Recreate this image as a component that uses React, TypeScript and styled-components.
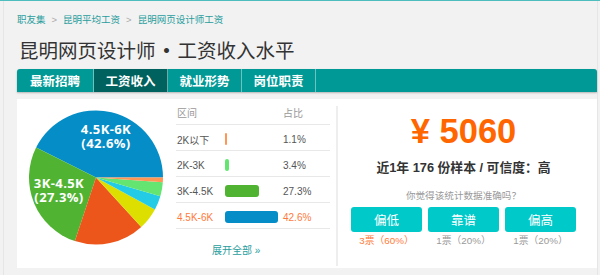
import React from 'react'
import styled, { createGlobalStyle } from 'styled-components'

const GlobalStyles = createGlobalStyle`
  html,
  body {
    margin: 0;
    padding: 0;
  }
  body {
    background: #f2f2f2;
    border-top: 1px solid #4dbdbd;
    font-family: 'Liberation Sans', 'Noto Sans CJK SC', sans-serif;
    color: #333;
  }
`

const Page = styled.div`
  margin: 0 2px 0 3px;
  padding: 11px 0 0 13px;
  border-left: 1px solid #e6e6e6;
  border-right: 1px solid #e6e6e6;
  min-height: 263px;
`

const Crumbs = styled.div`
  display: flex;
  align-items: center;
  height: 14px;
  font-size: 9.5px;
  font-family: 'Noto Sans CJK SC', sans-serif;
`
const Crumb = styled.a`
  color: #2a9d9d;
  text-decoration: none;
`
const CrumbSep = styled.span`
  color: #aaa;
  margin: 0 6px;
  font-family: 'Liberation Sans', sans-serif;
`

const Title = styled.h1`
  margin: 11px 0 0 2px;
  height: 26px;
  line-height: 26px;
  font-size: 19.5px;
  font-weight: normal;
  color: #333;
  font-family: 'Noto Sans CJK SC', sans-serif;
`
const Dot = styled.span`
  display: inline-block;
  width: 22px;
  text-align: center;
  font-weight: bold;
`

const TabBar = styled.div`
  margin-top: 6px;
  height: 23px;
  display: flex;
  background: #009996;
  border-radius: 3px 3px 0 0;
  box-shadow: 0 1px 2px rgba(0, 0, 0, 0.25);
`
const Tab = styled.div<{ $active?: boolean }>`
  width: 73px;
  display: flex;
  align-items: center;
  justify-content: center;
  color: #fff;
  font-weight: bold;
  font-size: 12.5px;
  font-family: 'Noto Sans CJK SC', sans-serif;
  background: ${p => (p.$active ? '#00625e' : 'transparent')};
  border-right: 1px solid rgba(200, 230, 230, 0.55);
  &:first-child {
    width: 76px;
    border-radius: 3px 0 0 0;
  }
`

const Panel = styled.div`
  margin-top: 7px;
  height: 169px;
  background: #fff;
  display: grid;
  grid-template-columns: 159px 160px 1fr;
`

const PieBox = styled.div`
  position: relative;
`

const TableBox = styled.div`
  display: flex;
  flex-direction: column;
  font-size: 10px;
  color: #555;
  margin-right: 6px;
`
const HeadRow = styled.div`
  display: grid;
  grid-template-columns: 106px 1fr;
  align-items: center;
  height: 24px;
  padding: 1px 0 0 1px;
  color: #999;
  border-bottom: 1px solid #e8e8e8;
`
const Row = styled.div<{ $hot?: boolean }>`
  display: grid;
  grid-template-columns: 48px 58px 1fr;
  align-items: center;
  height: 22px;
  padding: 3px 0 0 1px;
  border-bottom: 1px solid #e8e8e8;
  color: ${p => (p.$hot ? '#ff7a3a' : '#555')};
`
const Bar = styled.div<{ $color: string }>`
  height: 12px;
  border-radius: 3px;
  background: ${p => p.$color};
`
const More = styled.a`
  margin: 13px 0 0 36px;
  color: #2a9d9d;
  font-size: 10px;
  text-decoration: none;
`

const Summary = styled.div`
  border-left: 2px solid #eee;
  margin: 7px 0 6px;
  padding-right: 8px;
  display: flex;
  flex-direction: column;
  align-items: center;
`
const Salary = styled.div`
  margin-top: 5px;
  height: 40px;
  line-height: 40px;
  font-size: 34.5px;
  font-weight: bold;
  color: #ff6600;
`
const Sample = styled.div`
  margin-top: 9px;
  height: 16px;
  line-height: 16px;
  font-size: 12.8px;
  font-weight: bold;
  color: #333;
`
const Ask = styled.div`
  margin-top: 13px;
  height: 14px;
  line-height: 14px;
  font-size: 9.6px;
  color: #999;
`
const Votes = styled.div`
  margin-top: 4px;
  display: flex;
  gap: 6px;
`
const Vote = styled.div`
  display: flex;
  flex-direction: column;
  align-items: center;
`
const VoteButton = styled.button`
  width: 71px;
  height: 25px;
  border: none;
  border-radius: 3px;
  background: #00c9c9;
  color: #fff;
  font-size: 12.5px;
  font-family: 'Noto Sans CJK SC', sans-serif;
  padding: 0;
`
const VoteCount = styled.div<{ $hot?: boolean }>`
  margin-top: 2px;
  line-height: 14px;
  font-size: 9.8px;
  color: ${p => (p.$hot ? '#ff7a3a' : '#999')};
`

const slices = [
  { pct: 42.6, color: '#058DC7' },
  { pct: 27.3, color: '#50B432' },
  { pct: 16.9, color: '#ED561B' },
  { pct: 5.3, color: '#DDDF00' },
  { pct: 3.4, color: '#24CBE5' },
  { pct: 3.4, color: '#64E572' },
  { pct: 1.1, color: '#FF9655' },
]

const rows = [
  { label: '2K以下', pct: 1.1, color: '#FF9655' },
  { label: '2K-3K', pct: 3.4, color: '#64E572' },
  { label: '3K-4.5K', pct: 27.3, color: '#50B432' },
  { label: '4.5K-6K', pct: 42.6, color: '#058DC7', hot: true },
]

const Pie: React.FC = () => {
  const cx = 79
  const cy = 78.5
  const r = 67
  let start = 0
  const paths = slices.map(s => {
    const sweep = (s.pct / 100) * Math.PI * 2
    const end = start - sweep
    const x1 = cx + r * Math.cos(start)
    const y1 = cy + r * Math.sin(start)
    const x2 = cx + r * Math.cos(end)
    const y2 = cy + r * Math.sin(end)
    const large = sweep > Math.PI ? 1 : 0
    const d = `M${cx},${cy} L${x1},${y1} A${r},${r} 0 ${large} 0 ${x2},${y2} Z`
    start = end
    return <path key={s.color} d={d} fill={s.color} />
  })
  return (
    <svg width="159" height="169" viewBox="0 0 159 169">
      {paths}
      <g
        fill="#fff"
        fontFamily="'Open Sans', sans-serif"
        fontWeight="bold"
        fontSize="13"
        letterSpacing="0.4"
        textAnchor="middle"
      >
        <text x="89" y="35">
          4.5K-6K
          <tspan x="89" dy="14">(42.6%)</tspan>
        </text>
        <text x="42" y="89">
          3K-4.5K
          <tspan x="42" dy="14">(27.3%)</tspan>
        </text>
      </g>
    </svg>
  )
}

const App: React.FC = () => {
  return (
    <Page>
      <GlobalStyles />
      <Crumbs>
        <Crumb href="#">职友集</Crumb>
        <CrumbSep>&gt;</CrumbSep>
        <Crumb href="#">昆明平均工资</Crumb>
        <CrumbSep>&gt;</CrumbSep>
        <Crumb href="#">昆明网页设计师工资</Crumb>
      </Crumbs>
      <Title>
        昆明网页设计师<Dot>•</Dot>工资收入水平
      </Title>
      <TabBar>
        <Tab>最新招聘</Tab>
        <Tab $active>工资收入</Tab>
        <Tab>就业形势</Tab>
        <Tab>岗位职责</Tab>
      </TabBar>
      <Panel>
        <PieBox>
          <Pie />
        </PieBox>
        <TableBox>
          <HeadRow>
            <span>区间</span>
            <span>占比</span>
          </HeadRow>
          {rows.map(row => (
            <Row key={row.label} $hot={row.hot}>
              <span>{row.label}</span>
              <div>
                <Bar
                  $color={row.color}
                  style={{ width: Math.max(2, row.pct * 1.245) }}
                />
              </div>
              <span>{row.pct}%</span>
            </Row>
          ))}
          <More href="#">展开全部 »</More>
        </TableBox>
        <Summary>
          <Salary>¥ 5060</Salary>
          <Sample>近1年 176 份样本 / 可信度：高</Sample>
          <Ask>你觉得该统计数据准确吗？</Ask>
          <Votes>
            <Vote>
              <VoteButton>偏低</VoteButton>
              <VoteCount $hot>3票（60%）</VoteCount>
            </Vote>
            <Vote>
              <VoteButton>靠谱</VoteButton>
              <VoteCount>1票（20%）</VoteCount>
            </Vote>
            <Vote>
              <VoteButton>偏高</VoteButton>
              <VoteCount>1票（20%）</VoteCount>
            </Vote>
          </Votes>
        </Summary>
      </Panel>
    </Page>
  )
}

export default App
